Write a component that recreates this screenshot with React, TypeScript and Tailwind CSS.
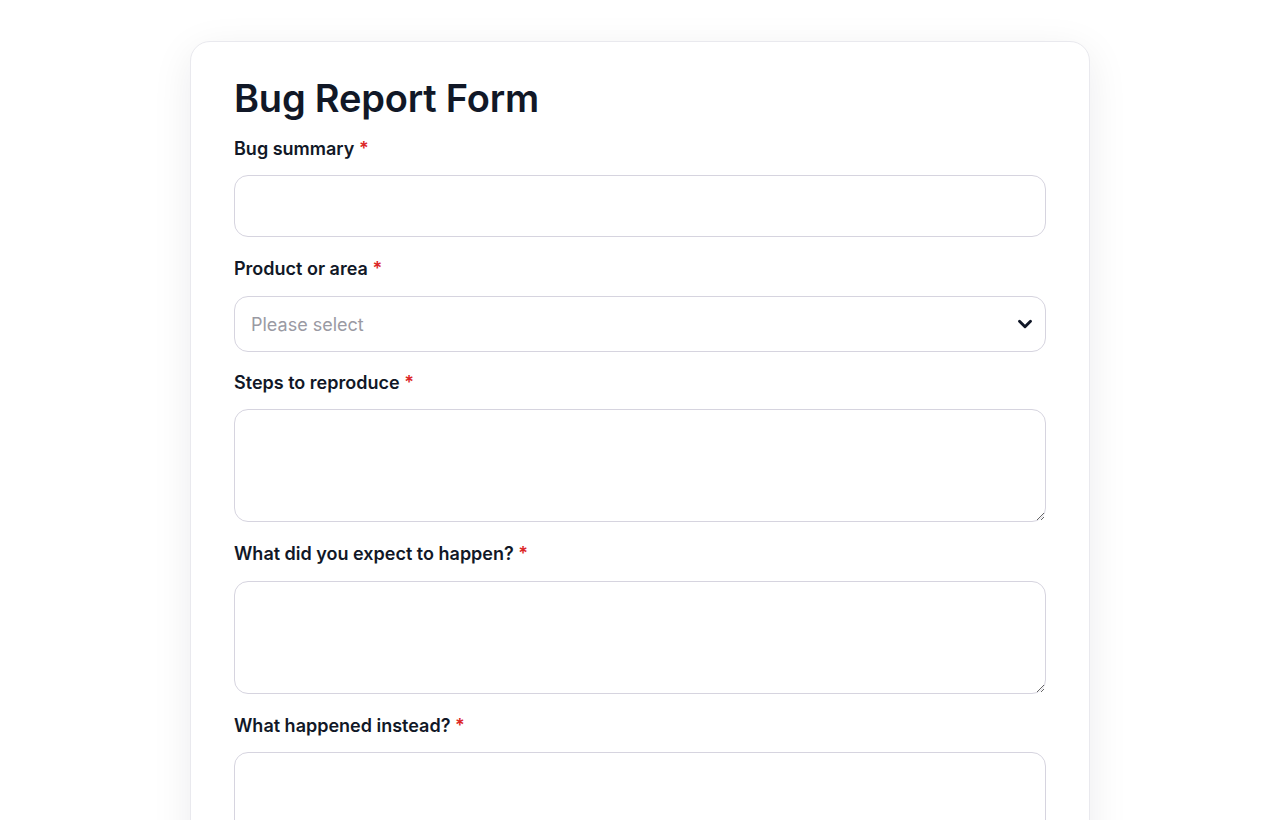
import { ChevronDown } from "lucide-react";

const labelCls = "block text-[18px] font-semibold leading-6 text-[#111827]";
const fieldCls =
  "block w-full rounded-[14px] border border-[#d6d4df] bg-white px-4 text-[18px] outline-none";

function Label({ text }: { text: string }) {
  return (
    <label className={labelCls}>
      {text} <span className="text-[#dc2626]">*</span>
    </label>
  );
}

export default function App() {
  return (
    <div
      className="min-h-screen bg-white pt-[41px]"
      style={{ fontFamily: "Inter, 'Noto Sans', sans-serif" }}
    >
      <div className="mx-auto w-[900px] rounded-[20px] border border-[#e9e9ee] bg-white px-[43px] pt-[28px] pb-10 shadow-[0_10px_40px_rgba(17,24,39,0.08)]">
        <h1 className="text-[38px] font-semibold leading-[56px] tracking-[-0.2px] text-[#111827]">
          Bug Report Form
        </h1>

        <div className="mt-[11px] flex flex-col">
          <div className="flex flex-col gap-[14px]">
            <Label text="Bug summary" />
            <input type="text" className={`${fieldCls} h-[62px] text-[#111827]`} />
          </div>

          <div className="mt-[20px] flex flex-col gap-[15px]">
            <Label text="Product or area" />
            <div className="relative">
              <select
                defaultValue=""
                className={`${fieldCls} h-[56px] appearance-none text-[#9a9aa3]`}
              >
                <option value="" disabled>
                  Please select
                </option>
                <option>Web app</option>
                <option>Mobile app</option>
                <option>API</option>
              </select>
              <ChevronDown
                className="pointer-events-none absolute right-[10px] top-1/2 h-[22px] w-[22px] -translate-y-1/2 text-[#111827]"
                strokeWidth={3.2}
              />
            </div>
          </div>

          <div className="mt-[19px] flex flex-col gap-[14px]">
            <Label text="Steps to reproduce" />
            <textarea className={`${fieldCls} h-[113px] py-3 text-[#111827]`} />
          </div>

          <div className="mt-[20px] flex flex-col gap-[15px]">
            <Label text="What did you expect to happen?" />
            <textarea className={`${fieldCls} h-[113px] py-3 text-[#111827]`} />
          </div>

          <div className="mt-[20px] flex flex-col gap-[14px]">
            <Label text="What happened instead?" />
            <textarea className={`${fieldCls} h-[113px] py-3 text-[#111827]`} />
          </div>
        </div>
      </div>
    </div>
  );
}
